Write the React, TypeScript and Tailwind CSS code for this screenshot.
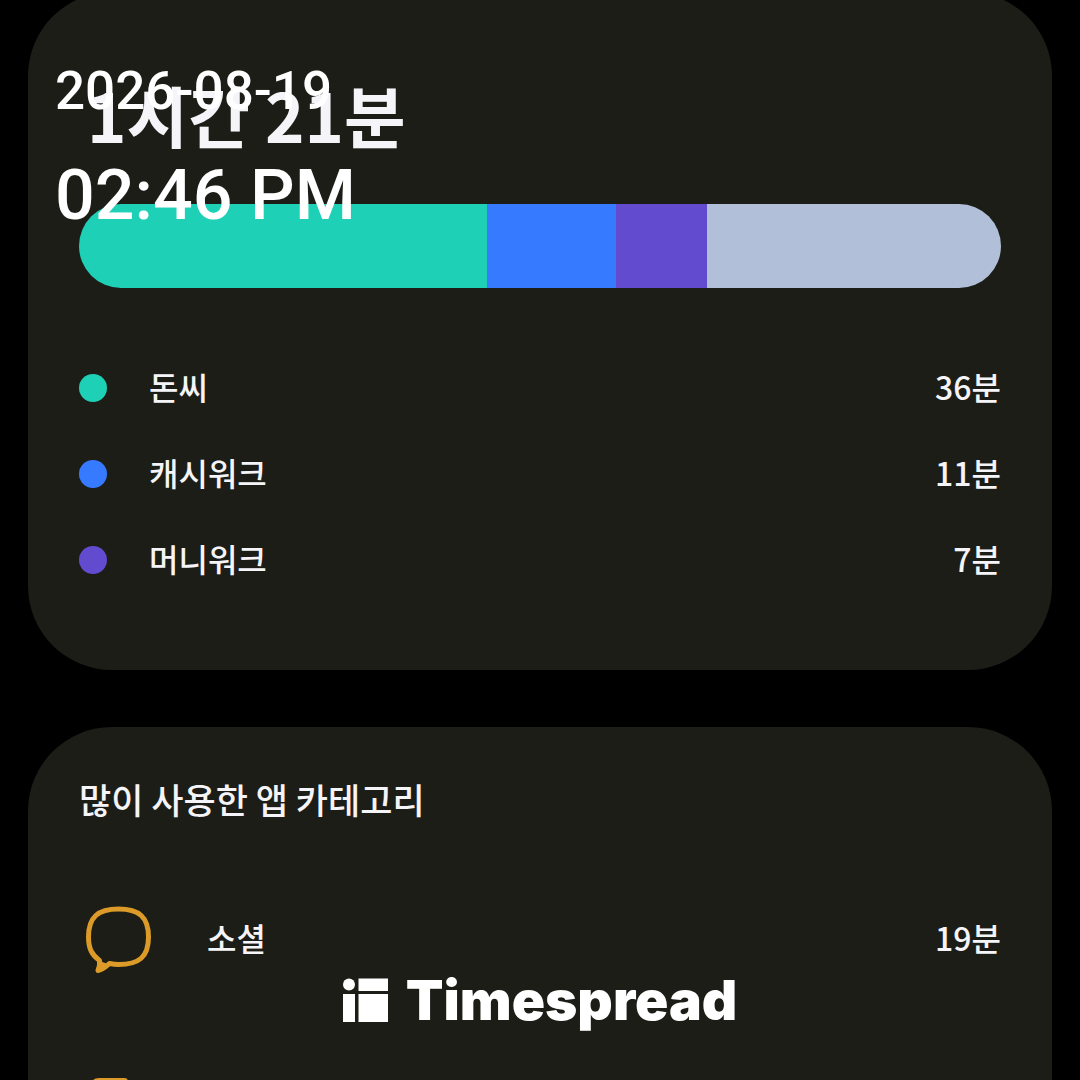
interface AppUsage {
  name: string
  minutes: number
  dot: string
}

const APPS: AppUsage[] = [
  { name: '돈씨', minutes: 36, dot: 'bg-[#1dd0b6]' },
  { name: '캐시워크', minutes: 11, dot: 'bg-[#367bff]' },
  { name: '머니워크', minutes: 7, dot: 'bg-[#624bcf]' },
]

const SEGMENTS = [
  { id: 'first', share: 408, color: 'bg-[#1dd0b6]' },
  { id: 'second', share: 129, color: 'bg-[#367bff]' },
  { id: 'third', share: 91, color: 'bg-[#624bcf]' },
  { id: 'rest', share: 294, color: 'bg-[#b1bfd8]' },
]

function ChatIcon() {
  return (
    <svg viewBox="0 0 80 80" className="size-20 shrink-0" fill="none" stroke="#dc9b28" strokeWidth="5" strokeLinejoin="round" aria-hidden="true">
      <path d="M39.500 10C60 10 69.500 18 69.500 38C69.500 58 60 65.500 39.500 65.500C36 65.500 33 65 30.500 64.500C27 67.500 24 71 19 71.500C20.500 68 21 64.500 20.500 61.500C13 56 9.500 50 9.500 38C9.500 18 19 10 39.500 10Z" />
      <path d="M20.500 62V71L29 65Z" fill="#dc9b28" stroke="none" />
    </svg>
  )
}

function DocumentIcon() {
  return (
    <svg viewBox="0 0 80 80" className="size-20 shrink-0" fill="none" stroke="#dc9b28" strokeWidth="4" strokeLinejoin="round" aria-hidden="true">
      <path d="M20 11H46L62 27V60Q62 70 52 70H26Q14 70 14 60V17Q14 11 20 11Z" />
    </svg>
  )
}

function BrandMark() {
  return (
    <svg viewBox="0 0 45 44" className="h-11 w-[45px] shrink-0" fill="#fff" aria-hidden="true">
      <circle cx="6" cy="6.500" r="6" />
      <rect x="15.500" y="0.500" width="29.500" height="12.500" />
      <rect x="0" y="16" width="12" height="28" />
      <rect x="15.500" y="16" width="29.500" height="28" />
    </svg>
  )
}

export default function App() {
  return (
    <div className="relative h-screen overflow-hidden bg-black px-7 text-[#f5f4f8]">
      <main className="font-['Noto_Sans_CJK_KR',sans-serif]">
        <section className="-mt-2 rounded-[84px] bg-[#1c1d17] px-[51px] pt-20 pb-[67px]">
          <h1 className="ml-2 text-[67px] leading-[84px] font-bold">1시간 21분</h1>

          <div className="mt-12 flex h-[84px] overflow-hidden rounded-full">
            {SEGMENTS.map((segment) => (
              <div key={segment.id} className={segment.color} style={{ flexGrow: segment.share }} />
            ))}
          </div>

          <ul className="mt-[57px]">
            {APPS.map((app) => (
              <li key={app.name} className="flex h-[86px] items-center text-[32px] font-medium">
                <span className={`mr-[42px] size-7 rounded-full ${app.dot}`} />
                <span className="pb-1">{app.name}</span>
                <span className="ml-auto pb-1">{app.minutes}분</span>
              </li>
            ))}
          </ul>
        </section>

        <section className="mt-[57px] rounded-t-[84px] bg-[#1c1d17] px-[51px] pt-12">
          <h2 className="text-[35px] leading-[48px] font-medium">많이 사용한 앱 카테고리</h2>

          <ul className="mt-9">
            <li className="flex h-[160px] items-center text-[32px] font-medium">
              <ChatIcon />
              <span className="ml-12 pb-1">소셜</span>
              <span className="ml-auto pb-1">19분</span>
            </li>
            <li className="flex h-[180px] items-center">
              <DocumentIcon />
            </li>
          </ul>
        </section>
      </main>

      <div className="absolute top-[61px] left-[55px] font-['Roboto',sans-serif] font-medium text-white">
        <p className="text-[53px] leading-[60px]">2026-08-19</p>
        <p className="mt-8 text-[70px] leading-[84px]">02:46 PM</p>
      </div>

      <div className="absolute inset-x-0 bottom-12 flex items-center justify-center gap-[18px] text-white">
        <BrandMark />
        <span className="font-['Inter',sans-serif] text-[55px] leading-[64px] font-black">Timespread</span>
      </div>
    </div>
  )
}
